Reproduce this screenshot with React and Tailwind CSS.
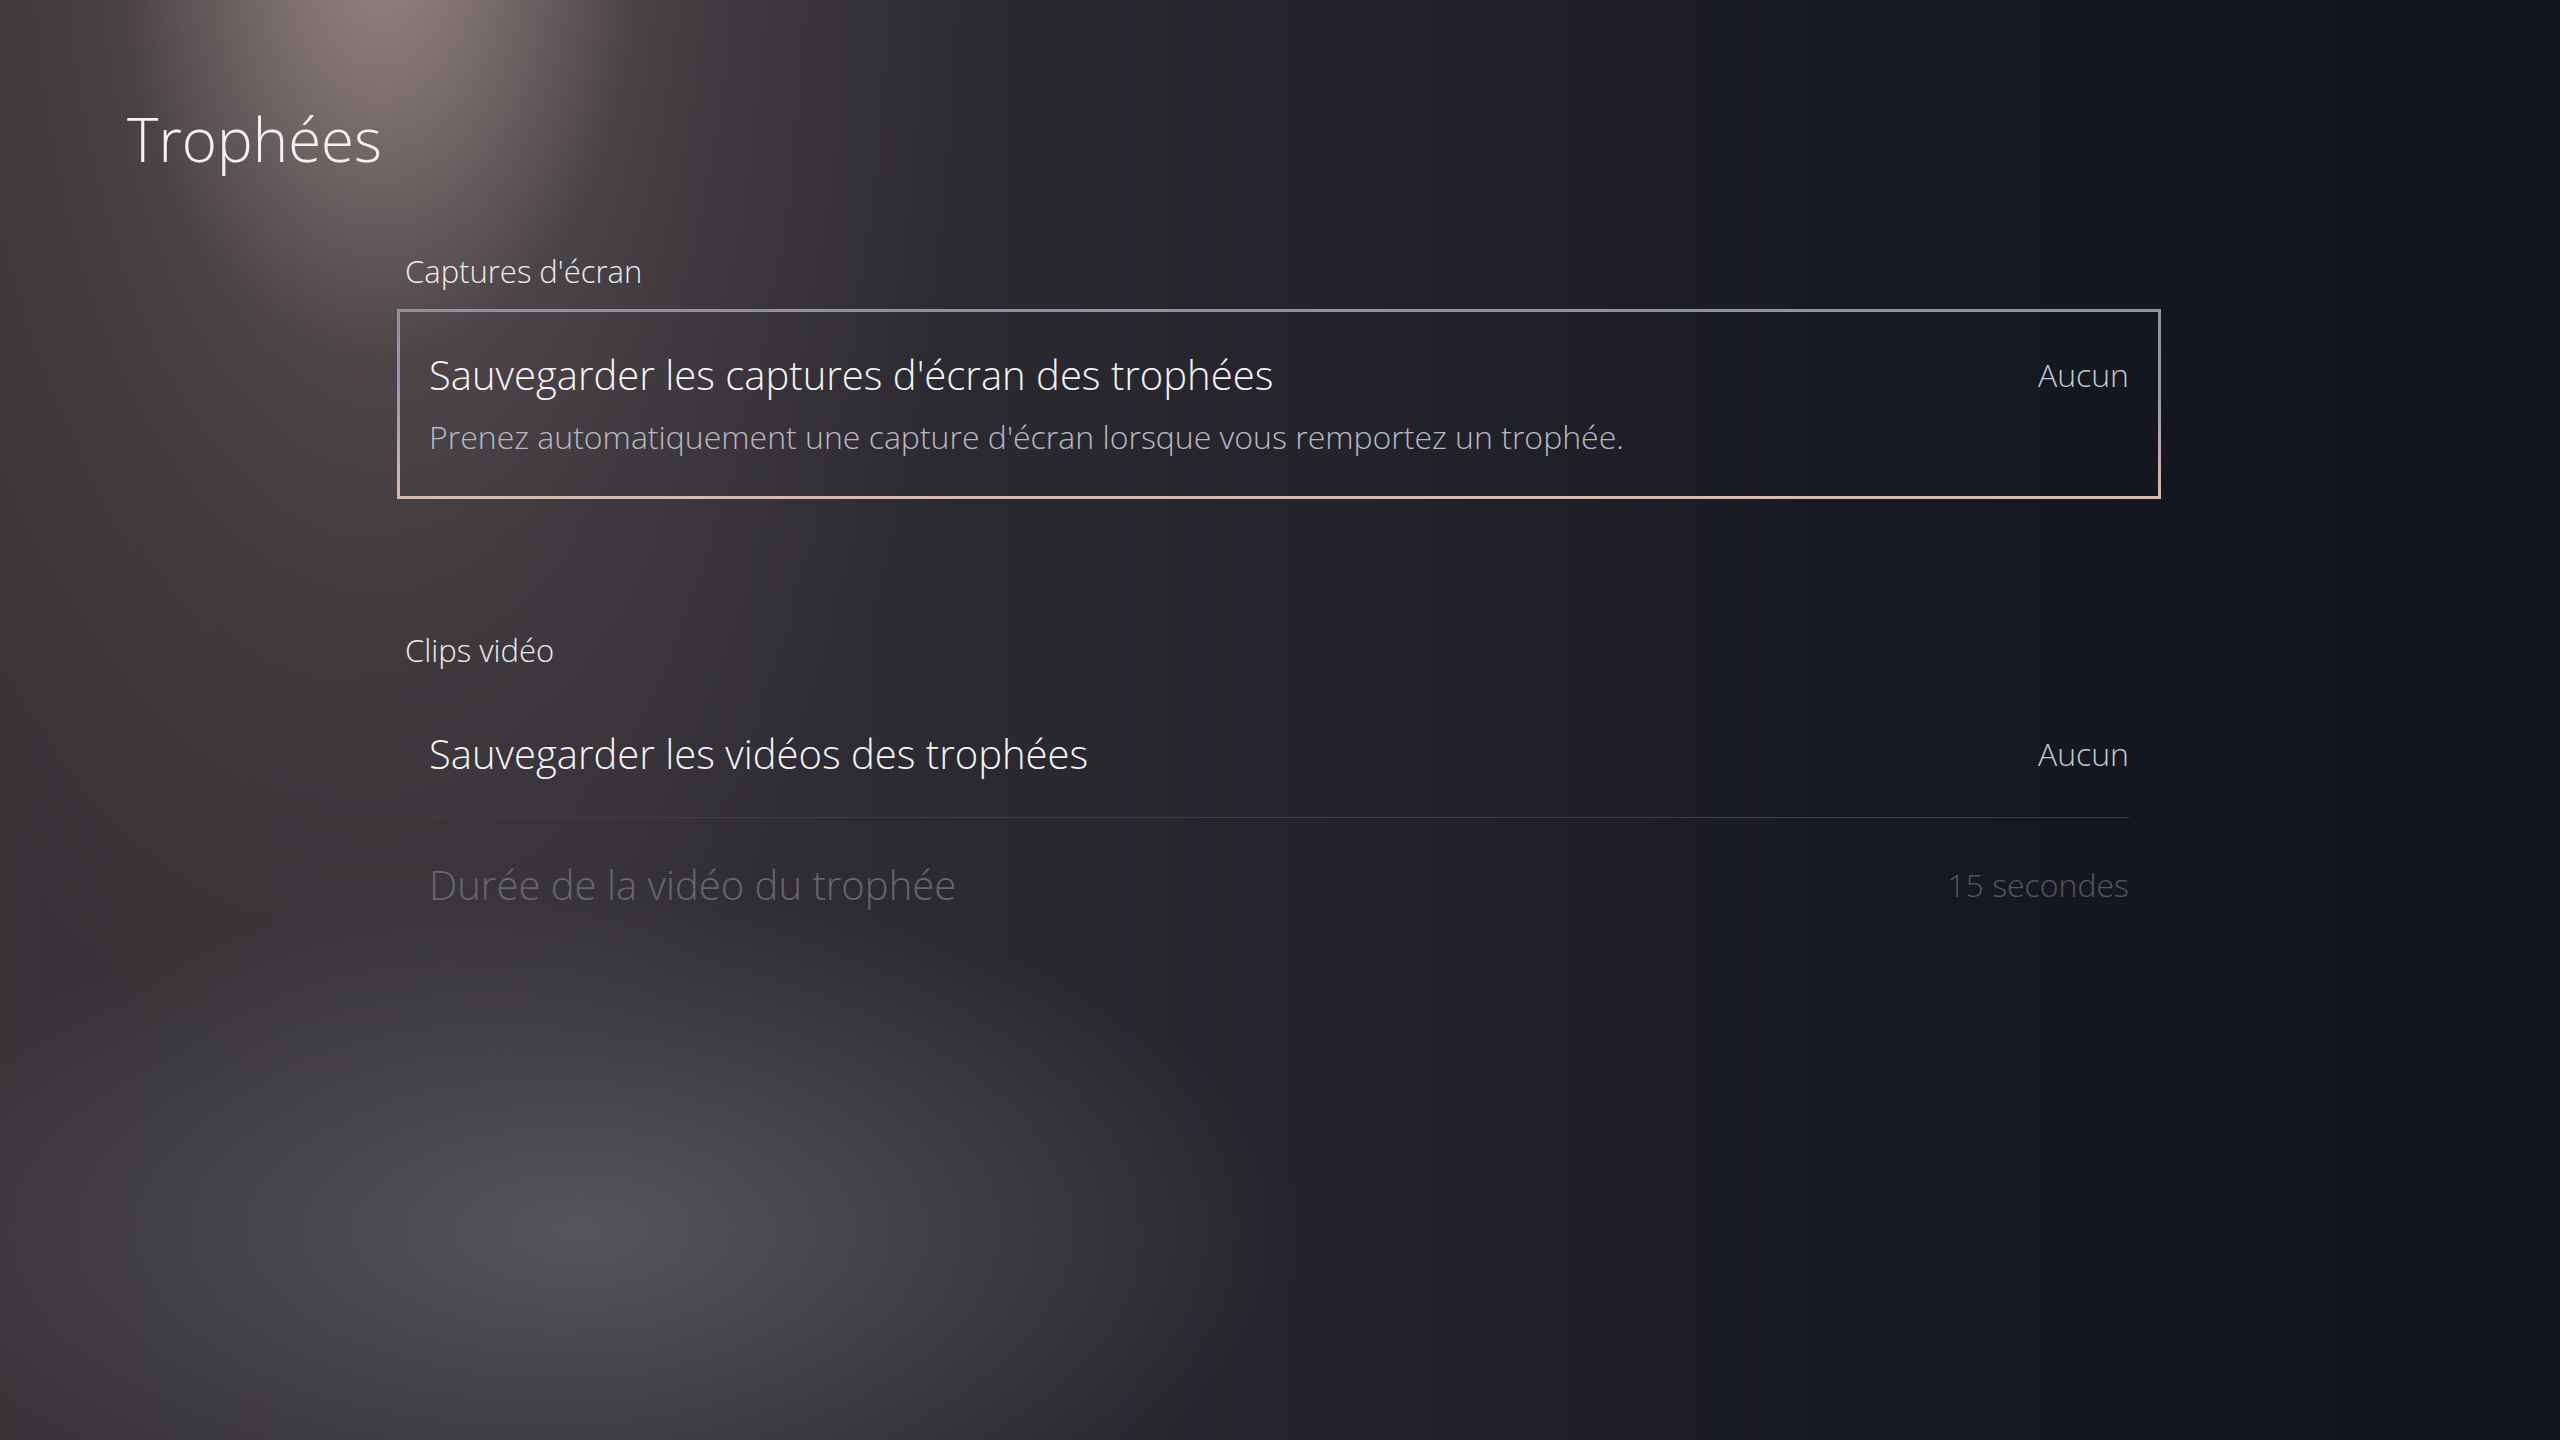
export default function App() {
    const font = { fontFamily: '"Open Sans", "Noto Sans", sans-serif' };

    return (
        <div
            style={font}
            className="min-h-screen w-full bg-[radial-gradient(ellipse_260px_420px_at_380px_-60px,rgba(185,165,160,0.6),transparent_100%),radial-gradient(ellipse_600px_1250px_at_390px_-120px,rgba(135,118,116,0.55),rgba(100,88,90,0.25)_60%,transparent_100%),radial-gradient(ellipse_720px_340px_at_580px_1230px,rgba(96,97,104,0.75),transparent_100%),linear-gradient(to_right,#373236_0%,#322f35_25%,#25242c_50%,#181a23_72%,#12141d_100%)] pb-[200px] font-light text-[#f2f2f2]"
        >
            <h1 className="pl-[127px] pt-[103px] text-[60px] leading-[72px] font-light">
                Trophées
            </h1>

            <div className="ml-[397px] w-[1764px]">
                {/* ======= Captures d'écran ======= */}
                <div className="mt-[76px] pl-[8px] text-[31px] leading-[40px] text-[#ececec]">
                    Captures d'écran
                </div>

                <div className="mt-[18px] border-[3px] border-transparent px-[29px] pt-[37px] pb-[39px] [border-image:linear-gradient(to_bottom,#8e91a3_0%,#9b99ad_45%,#d6b9b0_100%)_1]">
                    <div className="flex items-center justify-between">
                        <span className="text-[40px] leading-[52px] text-[#f4f4f4]">
                            Sauvegarder les captures d'écran des trophées
                        </span>
                        <span className="text-[32px] leading-[52px] text-[#c9c9d2]">
                            Aucun
                        </span>
                    </div>
                    <p className="mt-[16px] text-[32px] leading-[40px] text-[#b9b9c2]">
                        Prenez automatiquement une capture d'écran lorsque vous remportez un trophée.
                    </p>
                </div>

                {/* ======= Clips vidéo ======= */}
                <div className="mt-[131px] pl-[8px] text-[31px] leading-[40px] text-[#ececec]">
                    Clips vidéo
                </div>

                <div className="mt-[18px] border-[3px] border-transparent px-[29px]">
                    <div className="flex items-center justify-between border-b border-[#3c3d46] pt-[37px] pb-[37px]">
                        <span className="text-[40px] leading-[52px] text-[#f4f4f4]">
                            Sauvegarder les vidéos des trophées
                        </span>
                        <span className="text-[32px] leading-[52px] text-[#c9c9d2]">
                            Aucun
                        </span>
                    </div>
                    <div className="flex items-center justify-between pt-[41px] pb-[37px]">
                        <span className="text-[40px] leading-[52px] text-[#66666d]">
                            Durée de la vidéo du trophée
                        </span>
                        <span className="text-[32px] leading-[52px] text-[#55565e]">
                            15 secondes
                        </span>
                    </div>
                </div>
            </div>
        </div>
    );
}
